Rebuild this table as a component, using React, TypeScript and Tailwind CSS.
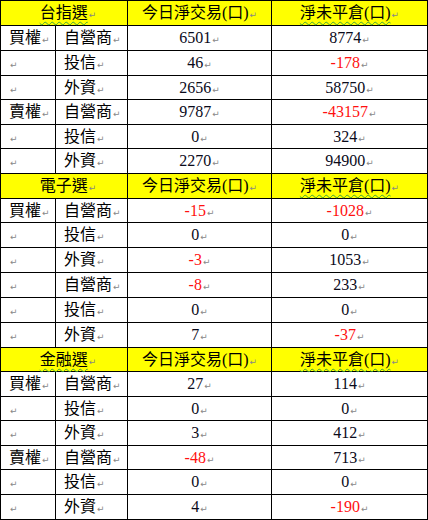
type Row = { side: string; who: string; today: string; oi: string };
type Section = { title: string; wavyTitle: boolean; rows: Row[] };

const sections: Section[] = [
  {
    title: "台指選",
    wavyTitle: true,
    rows: [
      { side: "買權", who: "自營商", today: "6501", oi: "8774" },
      { side: "", who: "投信", today: "46", oi: "-178" },
      { side: "", who: "外資", today: "2656", oi: "58750" },
      { side: "賣權", who: "自營商", today: "9787", oi: "-43157" },
      { side: "", who: "投信", today: "0", oi: "324" },
      { side: "", who: "外資", today: "2270", oi: "94900" },
    ],
  },
  {
    title: "電子選",
    wavyTitle: false,
    rows: [
      { side: "買權", who: "自營商", today: "-15", oi: "-1028" },
      { side: "", who: "投信", today: "0", oi: "0" },
      { side: "", who: "外資", today: "-3", oi: "1053" },
      { side: "", who: "自營商", today: "-8", oi: "233" },
      { side: "", who: "投信", today: "0", oi: "0" },
      { side: "", who: "外資", today: "7", oi: "-37" },
    ],
  },
  {
    title: "金融選",
    wavyTitle: true,
    rows: [
      { side: "買權", who: "自營商", today: "27", oi: "114" },
      { side: "", who: "投信", today: "0", oi: "0" },
      { side: "", who: "外資", today: "3", oi: "412" },
      { side: "賣權", who: "自營商", today: "-48", oi: "713" },
      { side: "", who: "投信", today: "0", oi: "0" },
      { side: "", who: "外資", today: "4", oi: "-190" },
    ],
  },
];

// measured line-to-line heights, 21 rows
const heights = [
  "h-[25px]", "h-[25px]", "h-[25px]", "h-[24px]", "h-[25px]", "h-[24px]", "h-[25px]",
  "h-[25px]", "h-[24px]", "h-[25px]", "h-[25px]", "h-[25px]", "h-[25px]", "h-[25px]",
  "h-[24px]", "h-[25px]", "h-[24px]", "h-[25px]", "h-[24px]", "h-[25px]", "h-[25px]",
];

const td = "border border-black p-0 align-middle whitespace-nowrap";

const Mark = () => (
  <span className="font-['DejaVu_Sans',sans-serif] text-[9px] text-[#888] ml-[1px]">↵</span>
);

const Wavy = ({ on, children }: { on: boolean; children: React.ReactNode }) =>
  on ? (
    <span className="underline decoration-wavy decoration-[#3aa53a] decoration-1 underline-offset-[3px]">
      {children}
    </span>
  ) : (
    <span>{children}</span>
  );

const Num = ({ v }: { v: string }) => (
  <td className={`${td} text-center`}>
    <span className={v.startsWith("-") ? "text-[#ff1010]" : "text-[#0a0a1a]"}>{v}</span>
    <Mark />
  </td>
);

export default function App() {
  return (
    <div className="bg-white w-[428px] h-[520px]">
      <table className="w-[427px] table-fixed border-collapse font-['Liberation_Serif','Noto_Sans_CJK_TC',serif] text-[16px] leading-none text-black">
        <colgroup>
          <col className="w-[55px]" />
          <col className="w-[72px]" />
          <col className="w-[144px]" />
          <col className="w-[156px]" />
        </colgroup>
        <tbody>
          {sections.map((s, si) => [
            <tr key={s.title} className={`${heights[si * 7]} bg-[#ffff00]`}>
              <td colSpan={2} className={`${td} text-center pl-2`}>
                <Wavy on={s.wavyTitle}>{s.title}</Wavy>
                <Mark />
              </td>
              <td className={`${td} text-center`}>
                今日淨交易(口)
                <Mark />
              </td>
              <td className={`${td} text-center`}>
                <Wavy on>淨未平倉(口)</Wavy>
                <Mark />
              </td>
            </tr>,
            ...s.rows.map((r, ri) => (
              <tr key={`${s.title}-${ri}`} className={heights[si * 7 + ri + 1]}>
                <td className={`${td} pl-2`}>
                  {r.side}
                  <Mark />
                </td>
                <td className={`${td} pl-2`}>
                  {r.who}
                  <Mark />
                </td>
                <Num v={r.today} />
                <Num v={r.oi} />
              </tr>
            )),
          ])}
        </tbody>
      </table>
    </div>
  );
}
